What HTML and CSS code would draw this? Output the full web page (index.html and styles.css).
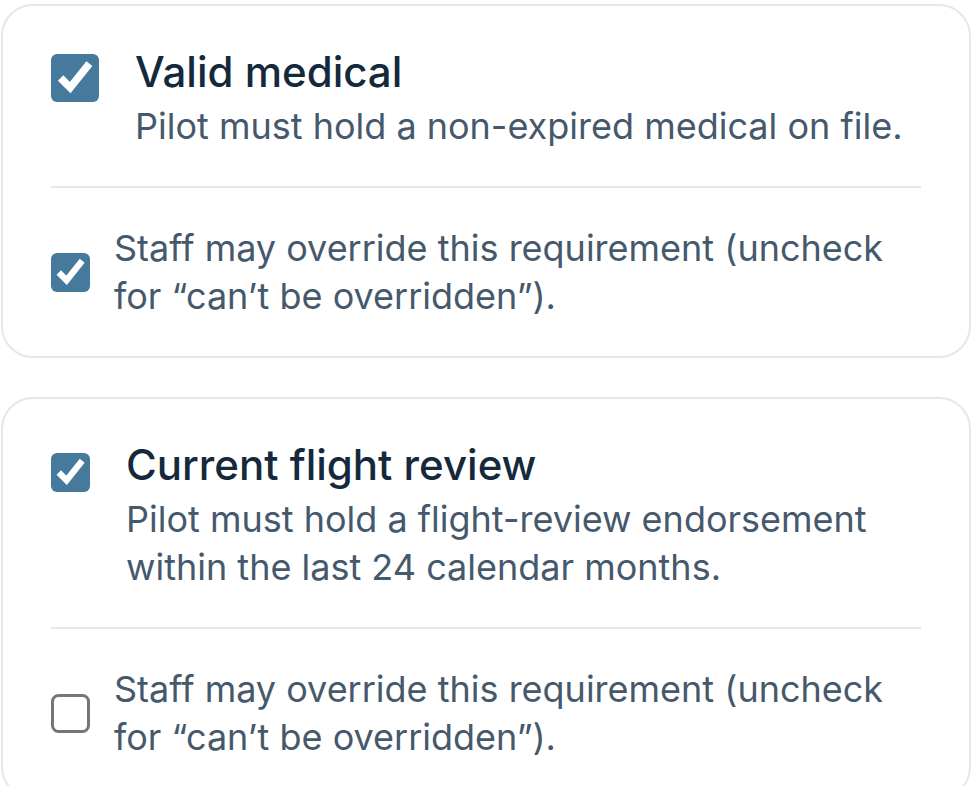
FILE: index.html
```html
<!DOCTYPE html>
<html lang="en">
<head>
    <meta charset="UTF-8">
    <meta name="viewport" content="width=device-width, initial-scale=1.0">
    <title>Requirements</title>
    <link rel="stylesheet" href="styles.css">
</head>
<body>
    <div class="list">
        <div class="card">
            <label class="req">
                <input type="checkbox" class="req-check big" checked>
                <div class="req-text">
                    <div class="req-title">Valid medical</div>
                    <div class="req-desc">Pilot must hold a non-expired medical on file.</div>
                </div>
            </label>
            <label class="override">
                <input type="checkbox" class="req-check" checked>
                <span>Staff may override this requirement (uncheck for “can’t be overridden”).</span>
            </label>
        </div>

        <div class="card">
            <label class="req">
                <input type="checkbox" class="req-check" checked>
                <div class="req-text">
                    <div class="req-title">Current flight review</div>
                    <div class="req-desc">Pilot must hold a flight-review endorsement within the last 24 calendar months.</div>
                </div>
            </label>
            <label class="override">
                <input type="checkbox" class="req-check">
                <span>Staff may override this requirement (uncheck for “can’t be overridden”).</span>
            </label>
        </div>
    </div>
</body>
</html>
```

FILE: styles.css
```css
body {
    margin: 0;
    padding: 4px 3px 0 1px;
    font-family: Inter, "Noto Sans", sans-serif;
    background: white;
}
.list {
    display: flex;
    flex-direction: column;
    gap: 39px;
}
.card {
    border: 2px solid #e5e7eb;
    border-radius: 32px;
    padding: 0 48px;
    background: white;
}
.req {
    display: flex;
    align-items: flex-start;
    gap: 36px;
    padding: 36px 0;
    border-bottom: 2px solid #e5e7eb;
}
.req-check {
    margin: 0;
    flex-shrink: 0;
    zoom: 3;
    accent-color: #467a9c;
}
.req .req-check {
    margin-top: 6px;
}
.req .req-check.big {
    width: 16px;
    height: 16px;
    margin-top: 4px;
}
.req-title {
    font-size: 42px;
    line-height: 60px;
    font-weight: 500;
    color: #15293d;
}
.req-desc {
    font-size: 36px;
    line-height: 48px;
    color: #46596c;
}
.override {
    display: flex;
    align-items: center;
    gap: 24px;
    padding: 36px 0;
    font-size: 36px;
    line-height: 48px;
    color: #46596c;
}
```
